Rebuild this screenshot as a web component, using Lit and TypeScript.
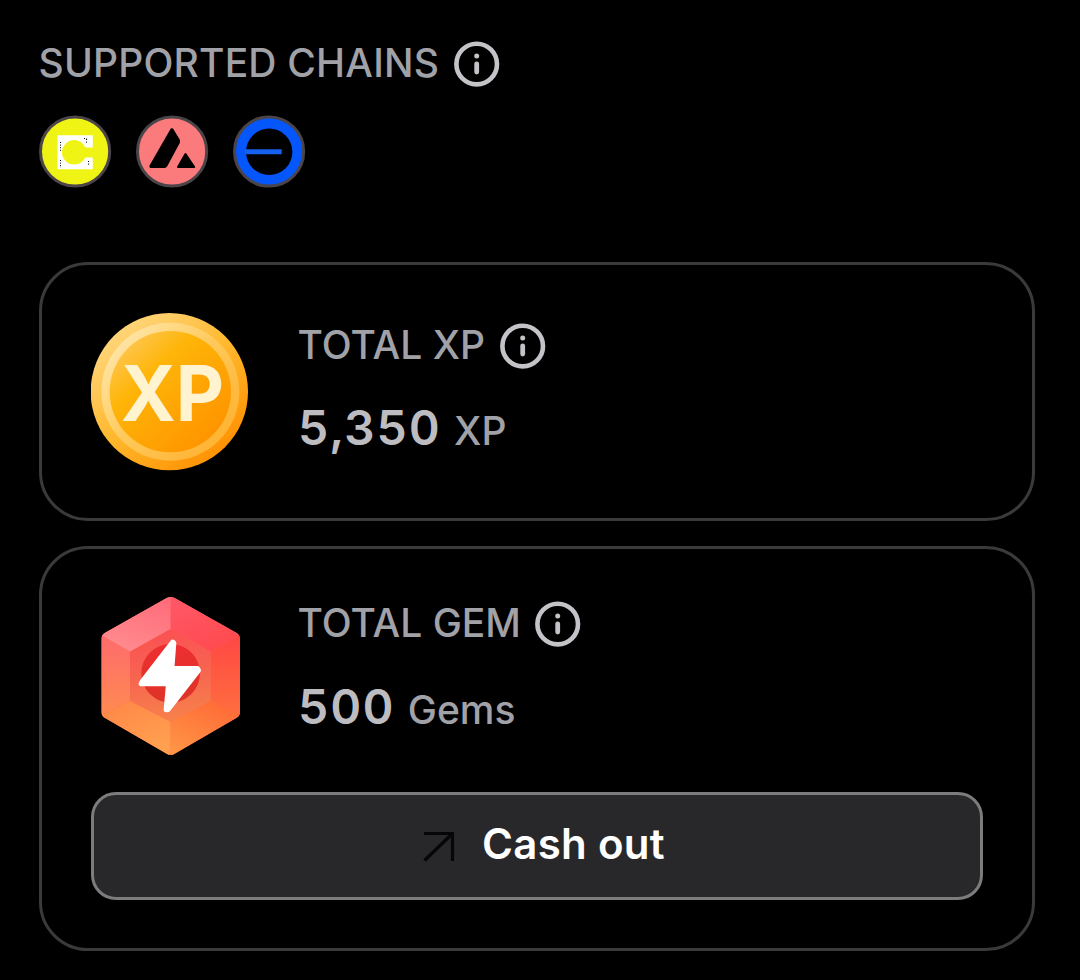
import { LitElement, html, css, svg } from 'lit'
import { customElement, property } from 'lit/decorators.js'

const coin = html`
  <svg viewBox="33 38 474 474">
    <defs>
      <linearGradient id="rim" x1="0.15" y1="0.1" x2="0.8" y2="0.9">
        <stop offset="0" stop-color="#ffd67c" />
        <stop offset="0.5" stop-color="#ffb92e" />
        <stop offset="1" stop-color="#ff9304" />
      </linearGradient>
      <linearGradient id="ring" x1="0.1" y1="0.15" x2="0.85" y2="0.85">
        <stop offset="0" stop-color="#ffe5a6" />
        <stop offset="0.5" stop-color="#ffc95a" />
        <stop offset="1" stop-color="#ffb434" />
      </linearGradient>
      <linearGradient id="face" x1="0.1" y1="0.15" x2="0.8" y2="0.9">
        <stop offset="0" stop-color="#ffc54c" />
        <stop offset="0.3" stop-color="#feb508" />
        <stop offset="1" stop-color="#ff9500" />
      </linearGradient>
    </defs>
    <circle cx="268" cy="274" r="236" fill="url(#rim)" />
    <circle cx="271" cy="274" r="207" fill="url(#ring)" />
    <circle cx="271" cy="274" r="182" fill="url(#face)" />
    <text x="122" y="361" textLength="310" lengthAdjust="spacingAndGlyphs">XP</text>
  </svg>
`

const gem = html`
  <svg viewBox="33 36 474 474">
    <defs>
      <linearGradient id="gem-left" x1="0" y1="0" x2="0" y2="1">
        <stop offset="0" stop-color="#fe6b6d" />
        <stop offset="1" stop-color="#ff8b50" />
      </linearGradient>
      <linearGradient id="gem-right" x1="0" y1="0" x2="0" y2="1">
        <stop offset="0" stop-color="#ff4644" />
        <stop offset="1" stop-color="#ff6f3f" />
      </linearGradient>
      <linearGradient id="gem-top-left" x1="0.8" y1="0" x2="0.3" y2="1">
        <stop offset="0" stop-color="#ff6c7b" />
        <stop offset="1" stop-color="#ff8c8e" />
      </linearGradient>
      <linearGradient id="gem-top-right" x1="0" y1="0" x2="0.6" y2="1">
        <stop offset="0" stop-color="#ff586a" />
        <stop offset="1" stop-color="#ff4b4f" />
      </linearGradient>
      <linearGradient id="gem-bottom-left" x1="0" y1="0" x2="0.5" y2="1">
        <stop offset="0" stop-color="#ff8547" />
        <stop offset="1" stop-color="#ffa04f" />
      </linearGradient>
      <linearGradient id="gem-bottom-right" x1="0.8" y1="0" x2="0.2" y2="1">
        <stop offset="0" stop-color="#ff6836" />
        <stop offset="1" stop-color="#ff9545" />
      </linearGradient>
      <linearGradient id="gem-face" x1="0.4" y1="0" x2="0.5" y2="1">
        <stop offset="0" stop-color="#fb5053" />
        <stop offset="0.5" stop-color="#f76550" />
        <stop offset="1" stop-color="#f7824b" />
      </linearGradient>
      <linearGradient id="gem-core" x1="0" y1="0" x2="0" y2="1">
        <stop offset="0" stop-color="#ee2e31" />
        <stop offset="1" stop-color="#dd3326" />
      </linearGradient>
      <clipPath id="gem-shape">
        <path d="M260 39Q272 33 284 39L470 144Q480 150 480 162V380Q480 392 470 398L284 506Q272 513 260 506L74 398Q64 392 64 380V162Q64 150 74 144Z" />
      </clipPath>
    </defs>
    <g clip-path="url(#gem-shape)">
      <path d="M60 30H484V514H60Z" fill="#ff6650" />
      <path d="M272 30V132L150 200L60 148V30Z" fill="url(#gem-top-left)" />
      <path d="M272 30V132L392 200L484 148V30Z" fill="url(#gem-top-right)" />
      <path d="M60 148L150 200V347L60 395Z" fill="url(#gem-left)" />
      <path d="M484 148L392 200V347L484 395Z" fill="url(#gem-right)" />
      <path d="M60 395L150 347L272 410V514H60Z" fill="url(#gem-bottom-left)" />
      <path d="M484 395L392 347L272 410V514H484Z" fill="url(#gem-bottom-right)" />
      <path d="M272 132L392 200V347L272 410L150 347V200Z" fill="url(#gem-face)" />
    </g>
    <circle cx="272" cy="265" r="88" fill="url(#gem-core)" />
    <path
      d="M278 172L187 290L184 296H266L259 374L264 373L355 256L352 251H275L281 174Z"
      fill="#fff" stroke="#fff" stroke-width="16" stroke-linejoin="round"
    />
  </svg>
`

const chains = [
  svg`
    <circle cx="36" cy="36.5" r="34" fill="#eff414" />
    <path d="M18.5 20.2H53.8V54.2H18.5Z" fill="#fff" />
    <circle cx="35.2" cy="37.3" r="12.2" fill="#eff414" />
    <path d="M39 32.5H54V42.5H39Z" fill="#eff414" />
    <path d="M21.5 27V37M21.5 45V53M47.5 24V29M49.5 46V50M45 23.5H48" stroke="#000" stroke-dasharray="1 1.6" />
  `,
  svg`
    <circle cx="36" cy="36.5" r="34" fill="#fb7a7c" />
    <path
      d="M36.3 14.2L43 25.2V27.4L30.4 50.8L29 52H14.6L14.4 51L35.5 14.2Z
        M49.5 39L58.2 52H42Z"
      stroke="#000" stroke-width="2" stroke-linejoin="round"
    />
  `,
  svg`
    <circle cx="36.2" cy="36.5" r="34" fill="#0556fb" />
    <circle cx="36.2" cy="36.8" r="23.2" />
    <path d="M12 34.3H48.7V39.3H12Z" fill="#1560ee" />
  `
]

@customElement('info-label')
export class InfoLabel extends LitElement {
  @property() text = ''

  static styles = css`
    :host {
      display: flex;
      align-items: flex-start;
      gap: 14.5px;
      height: 46px;
      margin-left: -0.5px;
      font-size: 39px;
      font-weight: 500;
      line-height: 44px;
      letter-spacing: 0.2px;
      color: #a1a1a8;
      white-space: nowrap;
    }

    svg {
      display: block;
      width: 46px;
      height: 46px;
      fill: none;
      stroke: #c4c4c8;
      stroke-linecap: round;
    }
  `

  render() {
    return html`
      <span>${this.text}</span>
      <svg viewBox="0 0 46 46">
        <circle cx="22.7" cy="23.1" r="20.3" stroke-width="4.6" />
        <path d="M22.7 22.8V31" stroke-width="4.8" />
        <path d="M22.7 15V15.01" stroke-width="5" />
      </svg>
    `
  }
}

@customElement('app-root')
export class AppRoot extends LitElement {
  static styles = css`
    :host {
      display: flex;
      flex-direction: column;
      box-sizing: border-box;
      height: 980px;
      padding: 41px 45px 29px 39px;
      background: #000;
      font-family: Inter, sans-serif;
      overflow: hidden;
    }

    svg {
      display: block;
    }

    .chains {
      display: flex;
      gap: 24px;
      margin: 28px 0 74px;
    }

    .chains svg {
      width: 73px;
      height: 73px;
    }

    .edge {
      fill: none;
      stroke: #4b4549;
      stroke-width: 3;
    }

    .card {
      box-sizing: border-box;
      border: 3px solid #3a3a3b;
      border-radius: 49px;
      padding: 48px 49px;
    }

    .card + .card {
      margin-top: 25px;
    }

    .row {
      display: flex;
      gap: 49px;
    }

    .row > svg {
      flex: none;
      width: 158px;
      height: 158px;
      margin-bottom: -1px;
    }

    .row text {
      font: 700 230px Inter, sans-serif;
      fill: #fff3d0;
    }

    .stat {
      padding-top: 10px;
    }

    .stat info-label {
      letter-spacing: 0;
    }

    .gems .stat {
      padding-top: 4px;
    }

    .value {
      display: flex;
      align-items: baseline;
      gap: 13px;
      margin-top: 29px;
      line-height: 60px;
      white-space: nowrap;
    }

    .gems .value {
      margin-top: 30px;
    }

    .amount {
      font-size: 48px;
      font-weight: 600;
      font-variant-numeric: tabular-nums;
      letter-spacing: 1.2px;
      color: #bdbdc1;
    }

    .unit {
      font-size: 39px;
      font-weight: 500;
      color: #a1a1a8;
    }

    button {
      display: flex;
      align-items: center;
      justify-content: center;
      gap: 27px;
      box-sizing: border-box;
      width: 100%;
      height: 108px;
      margin-top: 38px;
      padding: 0 0 6px;
      border: 3px solid #7c7c7c;
      border-radius: 25px;
      background: #28282a;
      color: #fff;
      font: 600 42px Inter, sans-serif;
      letter-spacing: 0.3px;
    }

    button svg {
      width: 34px;
      height: 34px;
      margin: 8px 0 0 12px;
      fill: none;
      stroke: #060606;
      stroke-width: 3.2;
    }
  `

  render() {
    return html`
      <info-label text="SUPPORTED CHAINS"></info-label>
      <div class="chains">
        ${chains.map(
          (chain) => html`
            <svg viewBox="0 0 73 73">
              ${chain}
              <circle class="edge" cx="36.1" cy="36.5" r="34.6" />
            </svg>
          `
        )}
      </div>

      <section class="card">
        <div class="row">
          ${coin}
          <div class="stat">
            <info-label text="TOTAL XP"></info-label>
            <div class="value">
              <span class="amount">5,350</span>
              <span class="unit">XP</span>
            </div>
          </div>
        </div>
      </section>

      <section class="card gems">
        <div class="row">
          ${gem}
          <div class="stat">
            <info-label text="TOTAL GEM"></info-label>
            <div class="value">
              <span class="amount">500</span>
              <span class="unit">Gems</span>
            </div>
          </div>
        </div>
        <button>
          <svg viewBox="0 0 34 34"><path d="M3 3.5H31.5V31M31.5 3.5L3.5 30.5" /></svg>
          <span>Cash out</span>
        </button>
      </section>
    `
  }
}

declare global {
  interface HTMLElementTagNameMap {
    'app-root': AppRoot
    'info-label': InfoLabel
  }
}
